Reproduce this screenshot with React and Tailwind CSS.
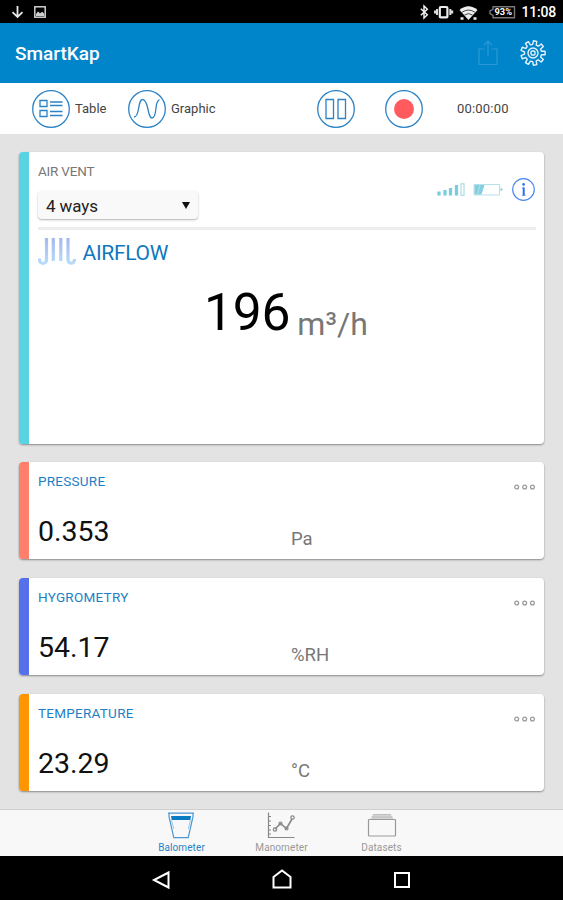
import clsx from 'clsx';

const MEASURES = [
  { label: 'PRESSURE',    value: '0.353', unit: 'Pa',  stripe: 'bg-[#ff7f6d]' },
  { label: 'HYGROMETRY',  value: '54.17', unit: '%RH', stripe: 'bg-[#5570ea]' },
  { label: 'TEMPERATURE', value: '23.29', unit: '°C',  stripe: 'bg-[#ff9500]' },
];

const TABS = [
  { label: 'Balometer', icon: BalometerIcon, active: true },
  { label: 'Manometer', icon: ManometerIcon },
  { label: 'Datasets',  icon: DatasetsIcon },
];

// One closed outline, four points per tooth
const GEAR = Array.from({ length: 9 }, (_, i) =>
  [[-12, 8.6], [-8, 12.2], [8, 12.2], [12, 8.6]].map(([off, r]) => {
    const a = ((i * 40 + off + 10) * Math.PI) / 180;
    return `${(14 + r * Math.sin(a)).toFixed(2)},${(14 - r * Math.cos(a)).toFixed(2)}`;
  }).join(' ')
).join(' ');

/* ── Status bar ── */
function StatusBar() {
  return (
    <div className="flex h-[23px] shrink-0 items-center justify-between bg-black pl-[11px] pr-[7px] text-white">
      <svg width="36" height="14" viewBox="0 0 36 14" fill="none">
        <path d="M6.5 1v11M1.5 7.2l5 4.8 5-4.8" stroke="#e8e8e8" strokeWidth="1.8" />
        <rect x="23.8" y="1.8" width="10.4" height="10.4" stroke="#d0d0d0" strokeWidth="1.5" />
        <path d="M25 11V9l2-2.4 2 1.6 2.4-1.4 2 2.2v2z" fill="#d0d0d0" />
      </svg>
      <div className="flex items-center">
        <svg width="98" height="18" viewBox="0 0 98 18" fill="none">
          {/* bluetooth */}
          <path d="M1.8 5.8l6.5 6L5 15V3l3.3 3.2-6.5 6" stroke="#eee" strokeWidth="1.5" />
          {/* vibrate */}
          <rect x="20.8" y="4" width="7.6" height="10.4" rx="1" stroke="#eee" strokeWidth="2.2" />
          <path d="M18 6v6M31.3 6v6M16 7.5v3M33.2 7.5v3" stroke="#ddd" strokeWidth="2" />
          {/* wifi */}
          <path d="M40.5 7Q49.5-.5 58.5 7L49.5 17z" fill="#eee" />
          <path d="M43 9.3q6.5-4.5 13 0M45.5 12q4-2.8 8 0" stroke="#000" strokeWidth="0.7" />
          <path d="M41.5 15.5h3M54.5 15.5h3" stroke="#eee" strokeWidth="2.4" />
          {/* battery */}
          <path d="M74 3.8h21.5v11H74v-2.5l-3-1.8V8l3-1.6z" stroke="#777" strokeWidth="1.4" />
          <text x="75.5" y="12.4" fill="#fff" fontSize="8.5" fontWeight="700" fontFamily="Roboto, sans-serif" textLength="17.5" lengthAdjust="spacingAndGlyphs">93%</text>
        </svg>
        <span className="ml-1 text-[14px] font-medium leading-none tracking-[-0.2px]">11:08</span>
      </div>
    </div>
  );
}

/* ── Icons ── */
function GearIcon() {
  return (
    <svg width="28" height="28" viewBox="0 0 28 28" fill="none" stroke="#e3f2fc" strokeWidth="1.4" strokeLinejoin="round">
      <polygon points={GEAR} />
      <circle cx="14" cy="14" r="5" />
      <rect x="12" y="12" width="4" height="4" rx="1.2" />
    </svg>
  );
}

function Round({ children }) {
  return (
    <svg width="40" height="40" viewBox="0 0 40 40" fill="none" stroke="#2b83c6" strokeWidth="1.3">
      <circle cx="20" cy="20" r="18.3" />
      {children}
    </svg>
  );
}

function BalometerIcon() {
  return (
    <svg className="relative -left-px" width="30" height="28" viewBox="0 0 30 28" fill="none" stroke="#4a97d2" strokeWidth="1.2">
      <path d="M2 1.2h26M3 1.2v3.5l4.8 21h14.4l4.800-21V1.200" />
      <path d="M5 4h20l-.7 4H5.700z" fill="#0a7cc4" stroke="none" />
      <path d="M5.500 8l2.200 9M24.500 8l-2.200 9" strokeWidth="0.500" />
    </svg>
  );
}

function ManometerIcon() {
  return (
    <svg className="relative -left-px" width="30" height="28" viewBox="0 0 30 28" fill="none" stroke="#888" strokeWidth="1.2">
      <path d="M2.500 .5v25H28.500M2.500 4.500H5M2.500 9H5M2.500 13.500H5M2.500 18H5M2.500 22H5" />
      <path d="M9 17L14.500 11.500l6 5L26 7" strokeWidth="1.6" />
      <circle cx="9" cy="17.5" r="1.7" />
      <circle cx="14.5" cy="11.5" r="1.5" />
      <circle cx="20.5" cy="16.5" r="1.5" />
      <circle cx="26.5" cy="5.5" r="1.7" />
    </svg>
  );
}

function DatasetsIcon() {
  return (
    <svg width="30" height="28" viewBox="0 0 30 28" fill="none" stroke="#999" strokeWidth="1.2">
      <rect x="1.500" y="7.500" width="27" height="16.500" rx="0.8" />
      <path d="M3.500 7L6 2.500h18L26.500 7z" fill="#d4d4d4" stroke="none" />
      <path d="M6 2.500h18M4.500 5h21" strokeWidth="0.8" stroke="#b5b5b5" />
    </svg>
  );
}

function AirflowIcon() {
  return (
    <svg className="-ml-px" width="40" height="30" viewBox="0 0 40 30" fill="none" stroke="url(#air)" strokeWidth="3.2">
      <defs>
        <linearGradient id="air" gradientUnits="userSpaceOnUse" x1="0" y1="1" x2="0" y2="29">
          <stop offset="0" stopColor="#a6b9ef" />
          <stop offset="1" stopColor="#b9e0fa" />
        </linearGradient>
      </defs>
      <path d="M9.500 0v22a3.500 3.500 0 0 1-7 0v-1.500M16.300 0v23M23.800 0v23M31 0v22a3.200 3.200 0 0 0 6.400 0v-1" />
    </svg>
  );
}

function Card({ stripe, className, children }) {
  return (
    <section className={clsx('flex overflow-hidden rounded-[4px] bg-white shadow-[0_1px_2px_rgba(0,0,0,0.4)]', className)}>
      <div className={clsx('w-[10px] shrink-0', stripe)} />
      <div className="flex min-w-0 flex-1 flex-col pl-[9px] pr-2">{children}</div>
    </section>
  );
}

function MeasureCard({ label, value, unit, stripe }) {
  return (
    <Card stripe={stripe} className="h-[97px] shrink-0">
      <div className="flex h-[40px] justify-between pt-[10px]">
        <h2 className="text-[13.5px] leading-[18px] tracking-[0.26px] text-[#1f7fc4]">{label}</h2>
        <svg className="mt-[11px]" width="22" height="8" viewBox="0 0 22 8" fill="none" stroke="#999" strokeWidth="1.3">
          <circle cx="2.7" cy="4" r="1.9" />
          <circle cx="10.7" cy="4" r="1.9" />
          <circle cx="18.4" cy="4" r="1.9" />
        </svg>
      </div>
      <div className="flex items-baseline pt-[12px]">
        <span className="w-[253px] text-[28.5px] leading-[36px] text-[#111]">{value}</span>
        <span className="relative top-[4px] text-[18.5px] text-[#777]">{unit}</span>
      </div>
    </Card>
  );
}

export default function App() {
  return (
    <div className="flex h-[900px] w-[563px] flex-col overflow-hidden bg-[#e3e3e3] font-[Roboto,sans-serif]">
      <StatusBar />

      {/* Header */}
      <header className="flex h-[60px] shrink-0 items-center bg-[#0085ca] pl-[15px] pr-4">
        <h1 className="flex-1 pt-[3px] text-[19px] font-medium text-white">SmartKap</h1>
        <svg className="mr-[20px]" width="22" height="28" viewBox="0 0 22 28" fill="none" stroke="#2c98d6" strokeWidth="1.2">
          <path d="M7.500 10H2v15.500h18V10h-5.500M11 17V2M7 6l4-4 4 4" />
        </svg>
        <GearIcon />
      </header>

      {/* Toolbar */}
      <div className="flex h-[51px] shrink-0 items-center bg-white pl-[31px] text-[13px] text-[#444]">
        <Round>
          <path d="M9 11.500h7v6H9zM9 21.500h7v6H9z" />
          <path d="M19 13h12.500M19 16.500h12.500M19 22.500h12.500M19 26.500h12.500" />
        </Round>
        <span className="ml-1 w-[52px]">Table</span>
        <Round>
          <path d="M7 28c2.500 0 3.500-2.500 4.500-8 1-6 1.500-9.500 4-9.500s4.500 5 5.500 10 2 8.500 4 8.500 3.500-5 4-10c.4-4.500 1.500-7.500 3.500-8.500" />
        </Round>
        <span className="ml-[4px] w-[145px]">Graphic</span>
        <Round>
          <path d="M10 10.500h7.500v19H10zM22 10.500h7.500v19H22z" />
        </Round>
        <span className="w-7" />
        <Round>
          <circle cx="20" cy="20" r="10" fill="#ff5b5f" stroke="none" />
        </Round>
        <span className="ml-[33px] tracking-[0.2px]">00:00:00</span>
      </div>

      {/* Cards */}
      <main className="flex flex-1 flex-col gap-[18.7px] pl-[19px] pr-[19px] pt-[18px]">
        <Card stripe="bg-[#57d3e1]" className="h-[291.5px] shrink-0">
          <div className="flex h-[78px] justify-between border-b-3 border-[#ededed] pt-[10px]">
            <div>
              <div className="text-[13.5px] leading-[18px] tracking-[-0.2px] text-[#777]">AIR VENT</div>
              <div className="mt-[11px] flex h-[28px] w-[160px] items-center justify-between rounded bg-[#f9f9f9] pl-2 pr-[8px] text-[17px] text-[#222] shadow-[0_1px_2px_rgba(0,0,0,0.3)]">
                <span className="pt-[3px] tracking-[-0.1px]">4 ways</span>
                <svg width="8" height="7" viewBox="0 0 8 7"><path d="M0 0h8L4 7z" fill="#111" /></svg>
              </div>
            </div>
            <svg className="mt-[15px]" width="102" height="26" viewBox="0 0 102 26" fill="none">
              <path d="M5 18.500v-4M11 18.500v-5.500M16.500 18.500v-7.500M22.500 18.500V8" stroke="#7accdf" strokeWidth="3.3" />
              <rect x="27" y="6.8" width="3" height="11.5" stroke="#9cd6e4" />
              <path d="M40 7.500H65.500v10.500H40z" stroke="#b5e1e9" />
              <path d="M40.500 8h10l-3 9.500h-7z" fill="#83cfe0" />
              <path d="M66.500 10.500l2.500 2-2.500 2z" fill="#8cd4e0" />
              <path d="M46 8l-2.500 9.500" stroke="#b5e1e9" />
              <circle cx="89.5" cy="12.5" r="10.8" stroke="#4d88f0" strokeWidth="1.2" />
              <path d="M89.700 10.500v8" stroke="#2a6ff0" strokeWidth="2" />
              <path d="M88 10.900h2M87.800 18.300h4" stroke="#2a6ff0" strokeWidth="0.6" />
              <circle cx="89.6" cy="7.4" r="1.3" fill="#2a6ff0" />
            </svg>
          </div>
          <div className="flex items-center pt-[8px]">
            <AirflowIcon />
            <h2 className="ml-[5.5px] text-[21px] leading-[30px] tracking-[-0.3px] text-[#1178be]">AIRFLOW</h2>
          </div>
          <div className="flex items-baseline pl-[166px] pt-[13px] text-black">
            <span className="text-[51.5px] leading-[64px] tracking-[-0.2px]">196</span>
            <span className="relative top-[5px] ml-[7px] text-[32px] text-[#777]">m³/h</span>
          </div>
        </Card>
        {MEASURES.map(m => <MeasureCard key={m.label} {...m} />)}
      </main>

      {/* Tabs */}
      <nav className="flex h-[47px] shrink-0 justify-center border-t border-[#cfcfcf] bg-[#f8f8f8]">
        {TABS.map(({ label, icon: Icon, active }) => (
          <button key={label} className={clsx('flex w-[100px] flex-col items-center pt-[2px] text-[10px] tracking-[0.1px]', active ? 'text-[#2b83c6]' : 'text-[#999]')}>
            <Icon />
            <span className="mt-[2px] leading-[12px]">{label}</span>
          </button>
        ))}
      </nav>

      {/* Android navigation */}
      <div className="flex h-[44px] shrink-0 items-center justify-center gap-[100px] bg-black">
        <svg className="relative -left-px top-[2px]" width="20" height="20" viewBox="0 0 20 20" fill="none" stroke="#fff" strokeWidth="2"><path d="M17.500 2.500v15L3 10z" /></svg>
        <svg className="relative top-px" width="20" height="20" viewBox="0 0 20 20" fill="none" stroke="#fff" strokeWidth="2"><path d="M1.500 8L10 1.500 18.500 8v10.500h-17z" /></svg>
        <svg className="relative top-[2px]" width="20" height="20" viewBox="0 0 20 20" fill="none" stroke="#fff" strokeWidth="2"><path d="M3 3h14v14H3z" /></svg>
      </div>
    </div>
  );
}
